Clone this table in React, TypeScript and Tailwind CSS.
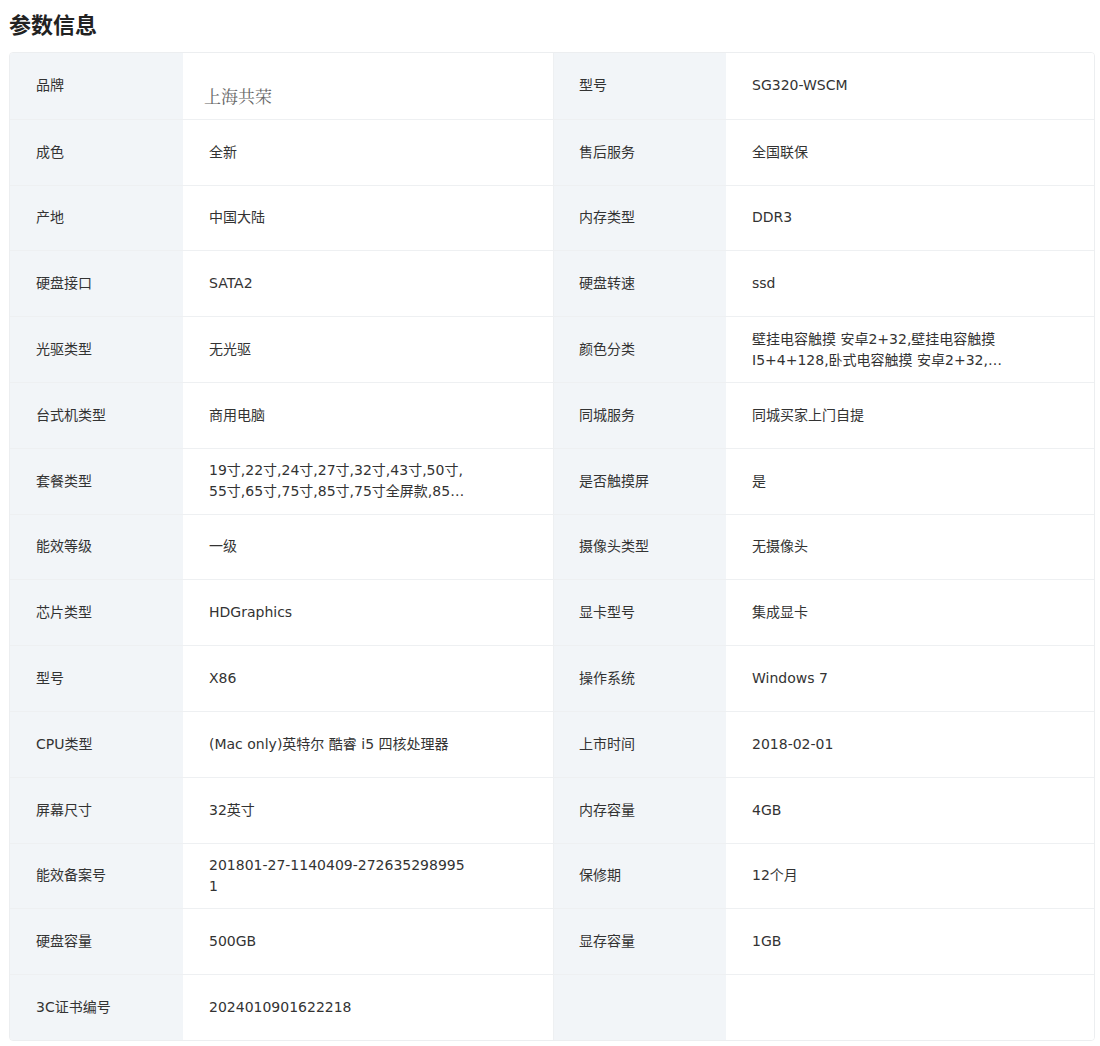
type Cell = { label: string; value: string[] };

const rows: [Cell, Cell | null][] = [
  [{ label: "品牌", value: ["上海共荣"] }, { label: "型号", value: ["SG320-WSCM"] }],
  [{ label: "成色", value: ["全新"] }, { label: "售后服务", value: ["全国联保"] }],
  [{ label: "产地", value: ["中国大陆"] }, { label: "内存类型", value: ["DDR3"] }],
  [{ label: "硬盘接口", value: ["SATA2"] }, { label: "硬盘转速", value: ["ssd"] }],
  [
    { label: "光驱类型", value: ["无光驱"] },
    {
      label: "颜色分类",
      value: ["壁挂电容触摸 安卓2+32,壁挂电容触摸", "I5+4+128,卧式电容触摸 安卓2+32,…"],
    },
  ],
  [{ label: "台式机类型", value: ["商用电脑"] }, { label: "同城服务", value: ["同城买家上门自提"] }],
  [
    {
      label: "套餐类型",
      value: ["19寸,22寸,24寸,27寸,32寸,43寸,50寸,", "55寸,65寸,75寸,85寸,75寸全屏款,85…"],
    },
    { label: "是否触摸屏", value: ["是"] },
  ],
  [{ label: "能效等级", value: ["一级"] }, { label: "摄像头类型", value: ["无摄像头"] }],
  [{ label: "芯片类型", value: ["HDGraphics"] }, { label: "显卡型号", value: ["集成显卡"] }],
  [{ label: "型号", value: ["X86"] }, { label: "操作系统", value: ["Windows 7"] }],
  [
    { label: "CPU类型", value: ["(Mac only)英特尔 酷睿 i5 四核处理器"] },
    { label: "上市时间", value: ["2018-02-01"] },
  ],
  [{ label: "屏幕尺寸", value: ["32英寸"] }, { label: "内存容量", value: ["4GB"] }],
  [
    { label: "能效备案号", value: ["201801-27-1140409-272635298995", "1"] },
    { label: "保修期", value: ["12个月"] },
  ],
  [{ label: "硬盘容量", value: ["500GB"] }, { label: "显存容量", value: ["1GB"] }],
  [{ label: "3C证书编号", value: ["2024010901622218"] }, null],
];

function Pair({ cell, first, right }: { cell: Cell | null; first: boolean; right?: boolean }) {
  return (
    <>
      <div
        className={`shrink-0 bg-[#f2f5f8] flex items-center text-[#333] w-[173px] ${
          right ? "border-l border-[#eef0f2] pl-[25px]" : "pl-[26px]"
        }`}
      >
        {cell?.label}
      </div>
      <div
        className={`flex flex-col justify-center bg-white pl-[26px] ${
          right ? "flex-1 min-w-0" : "w-[370px] shrink-0"
        }`}
      >
        {cell &&
          (first ? (
            <span className="pt-[19px] -ml-[5px] text-[17px] text-[#666] font-['Noto_Serif_CJK_SC','Noto_Sans_CJK_SC',serif]">
              {cell.value[0]}
            </span>
          ) : (
            cell.value.map((line, i) => (
              <span key={i} className="leading-[21px] text-[#333] whitespace-nowrap">
                {line}
              </span>
            ))
          ))}
      </div>
    </>
  );
}

export default function App() {
  return (
    <div className="bg-white min-h-screen px-[9px] pt-[8px] text-[14px] font-['DejaVu_Sans','Noto_Sans_CJK_SC',sans-serif]">
      {/* 标题 */}
      <h2 className="text-[22px] font-bold text-[#222] leading-[30px] mb-[14px] font-['Noto_Sans_CJK_SC',sans-serif]">
        参数信息
      </h2>

      {/* 参数表 */}
      <div className="w-[1086px] rounded border border-[#eceef0] overflow-hidden">
        {rows.map(([l, r], i) => (
          <div key={i} className={`flex h-[65.8px] ${i > 0 ? "border-t border-[#eef0f2]" : ""}`}>
            <Pair cell={l} first={i === 0} />
            <Pair cell={r} first={false} right />
          </div>
        ))}
      </div>
    </div>
  );
}
